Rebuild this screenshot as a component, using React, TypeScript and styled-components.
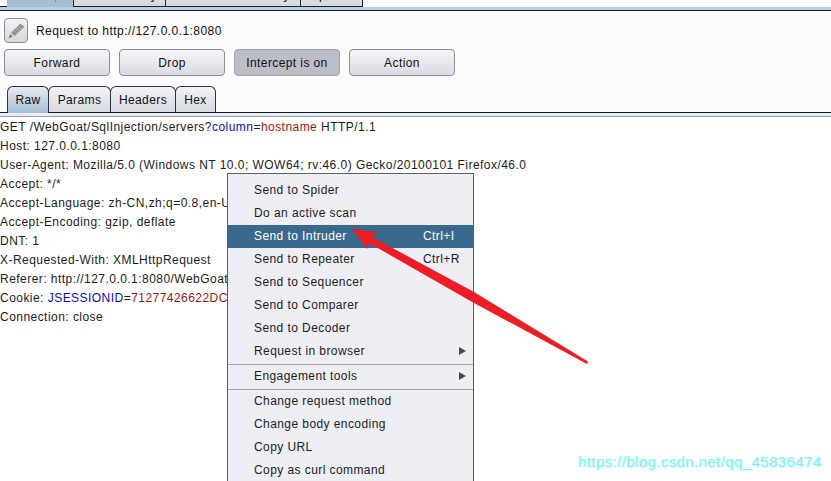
import React from "react";
import styled, { createGlobalStyle } from "styled-components";

const Global = createGlobalStyle`
  html, body { margin: 0; padding: 0; background: #fff; }
  body { width: 831px; height: 481px; overflow: hidden; font-family: "Liberation Sans", Arial, sans-serif; }
`;
const Page = styled.div`
  position: relative; width: 831px; height: 481px; overflow: hidden; background: #fff;
  display: flex; flex-direction: column; color: #111;
`;
const TopTabs = styled.div`
  display: flex; align-self: flex-start; height: 7px; padding-left: 7px; flex: none; box-sizing: border-box;
  border-bottom: 1px solid #14202e;
`;
const TopTab = styled.div<{ $w: number; $active?: boolean; $color?: string }>`
  width: ${p => p.$w}px; height: ${p => p.$active ? 7 : 6}px; box-sizing: border-box; overflow: hidden;
  border-right: 1px solid #1c2430; display: flex; justify-content: center; align-items: flex-start;
  background: ${p => p.$active ? "#a6bfd5" : "#d9dbe1"};
  font-size: 12px; letter-spacing: .45px; line-height: 14px; color: ${p => p.$color || "#111"};
  white-space: nowrap;
`;
const TopLabel = styled.span`
  margin-top: -12px;
`;
const Band = styled.div`
  height: 3px; flex: none; background: #bccfe0;
`;
const Panel = styled.div`
  flex: none; height: 103px; box-sizing: border-box; border-top: 1px solid #0d1526; border-bottom: 1px solid #0d1526;
  background: #fbfbfc; padding: 7px 4px 0; display: flex; flex-direction: column;
`;
const ReqRow = styled.div`
  display: flex; align-items: center; gap: 8px; height: 25px; font-size: 12px; letter-spacing: .45px;
`;
const IconBox = styled.div`
  width: 24px; height: 25px; box-sizing: border-box; border: 1px solid #8c8f96; border-radius: 4px;
  background: linear-gradient(#f4f4f6,#d5d7dc); display: flex; align-items: center; justify-content: center;
`;
const BtnRow = styled.div`
  display: flex; gap: 9px; margin-top: 6px;
`;
const Btn = styled.div<{ $on?: boolean }>`
  width: 106px; height: 27px; box-sizing: border-box; border-radius: 4px; font-size: 12px; letter-spacing: .4px;
  display: flex; align-items: center; justify-content: center;
  border: 1px solid ${p => p.$on ? "#a2a5ac" : "#8c8f96"};
  background: ${p => p.$on ? "#bbbec6" : "linear-gradient(#f5f6f8,#d9dbe2)"};
`;
const SubTabs = styled.div`
  display: flex; padding-left: 3px; margin-top: 10px;
`;
const SubTab = styled.div<{ $w: number; $active?: boolean }>`
  width: ${p => p.$w}px; height: ${p => p.$active ? 27 : 26}px; box-sizing: border-box; display: flex; align-items: center; justify-content: center;
  border: 1px solid #2a3342; border-bottom: none; margin-right: -1px; border-radius: 6px 6px 0 0;
  font-size: 12px; letter-spacing: .4px; position: relative; z-index: ${p => p.$active ? 1 : 0};
  background: ${p => p.$active ? "linear-gradient(#e6e9ee,#a4bfd6)" : "linear-gradient(#f2f3f6,#d8dae1)"};
`;
const Rule = styled.div`
  height: 4px; box-sizing: border-box; background: #e9eef4; border-bottom: 1px solid #9a9ca0; flex: none;
`;
const Editor = styled.div`
  padding-top: 1px; flex: 1; background: #fff; font-size: 12px; letter-spacing: .46px; color: #1c1c1c;
`;
const Line = styled.div`
  height: 19px; line-height: 19px; white-space: nowrap;
`;
const Key = styled.span`
  color: #0a0ad0;
`;
const Val = styled.span`
  color: #a01515;
`;
const Menu = styled.div`
  position: absolute; left: 227px; top: 173px; width: 247px; height: 320px; box-sizing: border-box;
  background: #eeeff4; border: 1px solid #5b5e63; padding-top: 5px;
  display: flex; flex-direction: column; font-size: 12px; letter-spacing: .42px; color: #1c1c24;
`;
const Item = styled.div<{ $hi?: boolean }>`
  height: 23px; flex: none; box-sizing: border-box; display: flex; align-items: center; padding: 0 7px 2px 26px;
  background: ${p => p.$hi ? "#39698c" : "transparent"};
  color: ${p => p.$hi ? "#fff" : "inherit"};
`;
const ItemLabel = styled.span`
  width: 169px; white-space: nowrap;
`;
const SubArrow = styled.span`
  margin-left: auto; width: 0; height: 0; border-left: 7px solid #4a4a4a;
  border-top: 4.5px solid transparent; border-bottom: 4.5px solid transparent;
`;
const Sep = styled.div`
  height: 1px; background: #a5a7ac; margin-top: 1px; flex: none;
`;
const Arrow = styled.svg`
  position: absolute; left: 0; top: 0; pointer-events: none;
`;
const Mark = styled.div`
  position: absolute; left: 578px; top: 452px; font-size: 15px; letter-spacing: .4px; line-height: 20px;
  color: #7df3f6; text-shadow: 1px 1px 2px rgba(150,230,235,.6); white-space: nowrap;
`;

const items1: [string, string?, boolean?][] = [
  ["Send to Spider"], ["Do an active scan"], ["Send to Intruder", "Ctrl+I", true], ["Send to Repeater", "Ctrl+R"],
  ["Send to Sequencer"], ["Send to Comparer"], ["Send to Decoder"],
];

export default function App() {
  return (
    <Page>
      <Global />
      <TopTabs>
        <TopTab $w={67} $active $color="#e8641e"><TopLabel>Intercept</TopLabel></TopTab>
        <TopTab $w={92}><TopLabel>HTTP history</TopLabel></TopTab>
        <TopTab $w={135}><TopLabel>WebSockets history</TopLabel></TopTab>
        <TopTab $w={62}><TopLabel>Options</TopLabel></TopTab>
      </TopTabs>
      <Band />
      <Panel>
        <ReqRow>
          <IconBox>
            <svg width="20" height="20" viewBox="0 0 20 20">
              <path d="M14.5 2.5 L18.5 6 L8.5 15 L5.2 11.8 Z" fill="#8b8d91" />
              <path d="M7.5 11.5 L15.5 4.5 M9.3 13 L17 6.2" stroke="#bcbdc1" strokeWidth="0.8" />
              <path d="M4.3 13 L6.8 15.5 L2.5 17.5 Z" fill="#77797d" />
            </svg>
          </IconBox>
          <span>Request to http://127.0.0.1:8080</span>
        </ReqRow>
        <BtnRow>
          <Btn>Forward</Btn>
          <Btn>Drop</Btn>
          <Btn $on>Intercept is on</Btn>
          <Btn>Action</Btn>
        </BtnRow>
        <SubTabs>
          <SubTab $w={42} $active>Raw</SubTab>
          <SubTab $w={63}>Params</SubTab>
          <SubTab $w={66}>Headers</SubTab>
          <SubTab $w={41}>Hex</SubTab>
        </SubTabs>
      </Panel>
      <Rule />
      <Editor>
        <Line>GET /WebGoat/SqlInjection/servers?<Key>column</Key>=<Val>hostname</Val> HTTP/1.1</Line>
        <Line>Host: 127.0.0.1:8080</Line>
        <Line>User-Agent: Mozilla/5.0 (Windows NT 10.0; WOW64; rv:46.0) Gecko/20100101 Firefox/46.0</Line>
        <Line>Accept: */*</Line>
        <Line>Accept-Language: zh-CN,zh;q=0.8,en-US;q=0.5,en;q=0.3</Line>
        <Line>Accept-Encoding: gzip, deflate</Line>
        <Line>DNT: 1</Line>
        <Line>X-Requested-With: XMLHttpRequest</Line>
        <Line>Referer: http://127.0.0.1:8080/WebGoat/start.mvc</Line>
        <Line>Cookie: <Key>JSESSIONID</Key>=<Val>71277426622DC9A1B3</Val></Line>
        <Line>Connection: close</Line>
      </Editor>
      <Menu>
        {items1.map(([t, k, h]) => (
          <Item key={t} $hi={h}><ItemLabel>{t}</ItemLabel>{k && <span>{k}</span>}</Item>
        ))}
        <Item><ItemLabel>Request in browser</ItemLabel><SubArrow /></Item>
        <Sep />
        <Item><ItemLabel>Engagement tools</ItemLabel><SubArrow /></Item>
        <Sep />
        <Item>Change request method</Item>
        <Item>Change body encoding</Item>
        <Item>Copy URL</Item>
        <Item>Copy as curl command</Item>
      </Menu>
      <Arrow width="831" height="481" viewBox="0 0 831 481">
        <polygon points="352,228.5 377,232.5 372,237 474,292 588,361.5 587,364 474,303 369,243 367,249" fill="#ee1c25" />
      </Arrow>
      <Mark>https://blog.csdn.net/qq_45836474</Mark>
    </Page>
  );
}
